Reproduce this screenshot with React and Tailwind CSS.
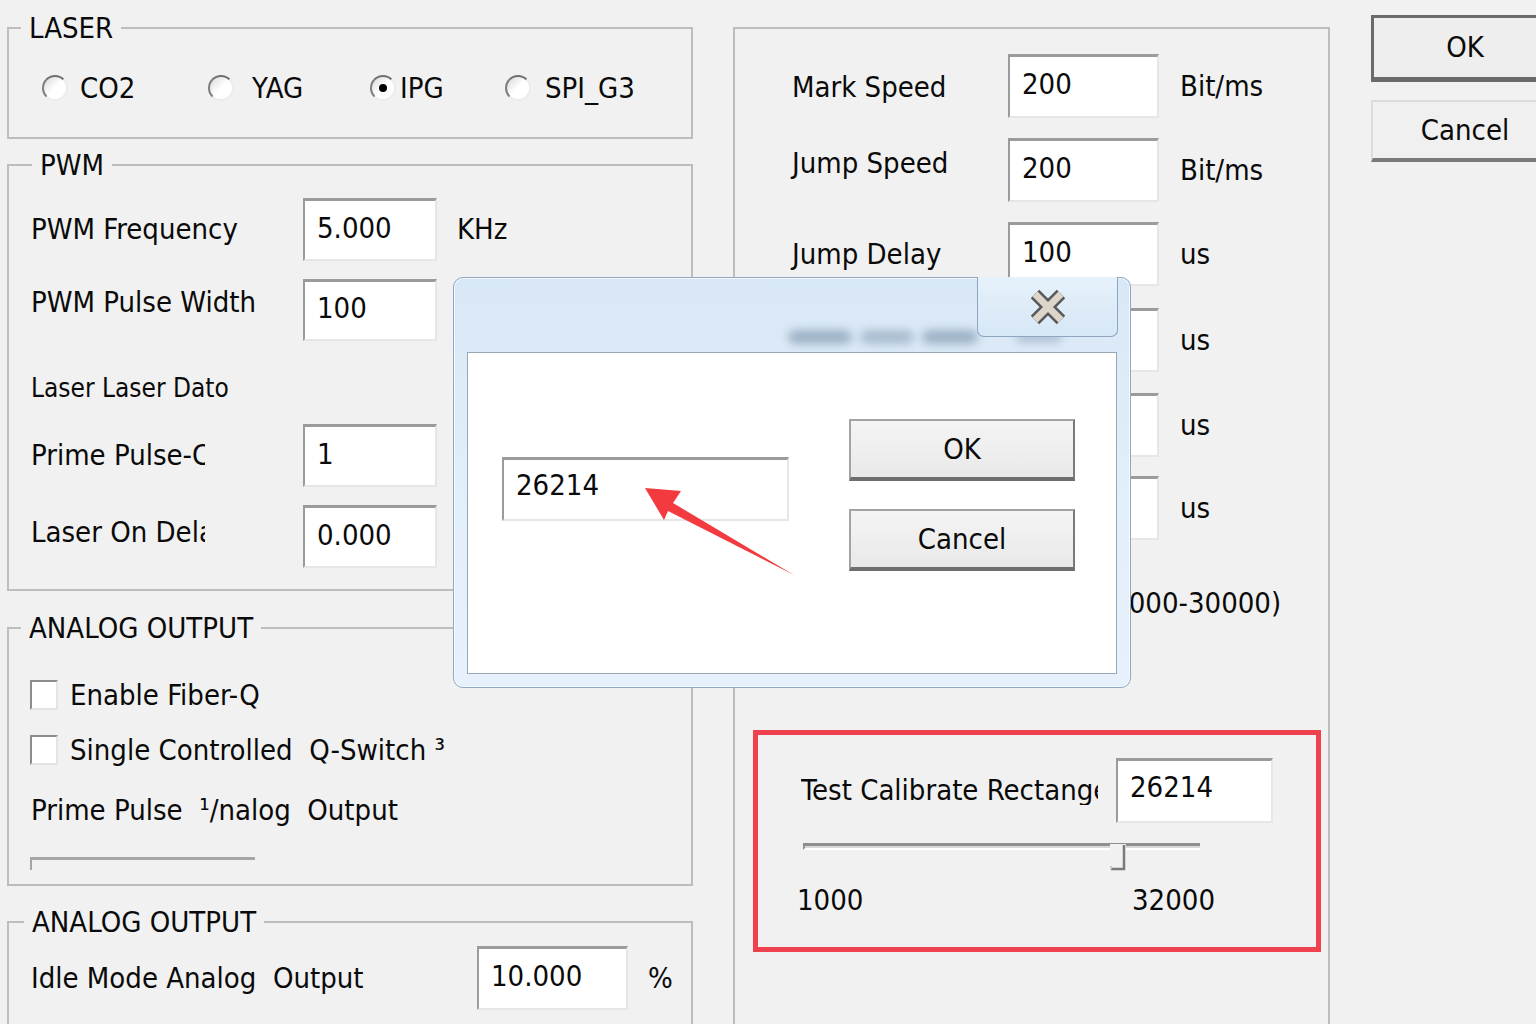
import React from 'react';

const FONT = "font-['DejaVu_Sans_Condensed','DejaVu_Sans',sans-serif]";

function TextBox({ className = '', children }) {
  return (
    <div
      className={`shrink-0 bg-white border-2 border-t-[3px] border-t-[#9b9b9b] border-l-[#9b9b9b] border-r-[#e6e6e6] border-b-[#e6e6e6] flex items-center pl-[12px] pb-[4px] text-[29px] leading-none ${className}`}
    >
      {children}
    </div>
  );
}

function WinButton({ className = '', children }) {
  return (
    <div
      className={`shrink-0 bg-gradient-to-b from-[#f4f4f4] to-[#e9e9e9] border-2 border-t-[#a3a3a3] border-l-[#a3a3a3] border-r-[#7a7a7a] border-b-[4px] border-b-[#6e6e6e] flex items-center justify-center text-[29px] leading-none ${className}`}
    >
      {children}
    </div>
  );
}

function Radio({ checked }) {
  return (
    <div className="shrink-0 w-[26px] h-[26px] rounded-full bg-gradient-to-br from-[#d8d8d8] via-white to-white border-2 border-t-[#6f6f6f] border-l-[#7d7d7d] border-r-[#ececec] border-b-[#ececec] flex items-center justify-center">
      {checked && <div className="w-[8px] h-[8px] rounded-full bg-black" />}
    </div>
  );
}

function Check() {
  return (
    <div className="shrink-0 w-[28px] h-[30px] bg-white border-2 border-t-[#8c8c8c] border-l-[#8c8c8c] border-r-[#e4e4e4] border-b-[#e4e4e4]" />
  );
}

function Group({ title, className = '', legendClass = 'ml-[12px]', children }) {
  return (
    <fieldset className={`shrink-0 border-2 border-[#bdbdbd] ${className}`}>
      <legend className={`${legendClass} px-[8px] text-[29px] leading-[36px]`}>{title}</legend>
      {children}
    </fieldset>
  );
}

function Row({ label, value, unit, className = '' }) {
  return (
    <div className={`flex items-center h-[64px] ${className}`}>
      <div className="w-[216px] shrink-0 whitespace-nowrap">{label}</div>
      <TextBox className="w-[151px] h-[64px]">{value}</TextBox>
      <div className="ml-[21px]">{unit}</div>
    </div>
  );
}

export default function App() {
  return (
    <div className={`relative w-[1536px] h-[1024px] overflow-hidden bg-[#f1f1f1] text-[#0a0a0a] text-[29px] leading-none flex ${FONT}`}>
      {/* left column */}
      <div className="shrink-0 ml-[7px] w-[686px] flex flex-col">
        <Group title="LASER" className="mt-[10px] h-[129px]">
          <div className="mt-[24px] h-[36px] pl-[33px] flex items-center">
            <div className="w-[166px] flex items-center gap-[12px]"><Radio /><span>CO2</span></div>
            <div className="w-[162px] flex items-center gap-[18px]"><Radio /><span>YAG</span></div>
            <div className="w-[135px] flex items-center gap-[4px]"><Radio checked /><span>IPG</span></div>
            <div className="flex items-center gap-[14px]"><Radio /><span>SPI_G3</span></div>
          </div>
        </Group>

        <Group title="PWM" legendClass="ml-[23px]" className="mt-[8px] h-[444px]">
          <div className="mt-[15px] h-[63px] pl-[22px] flex items-center">
            <div className="w-[272px] shrink-0">PWM Frequency</div>
            <TextBox className="w-[134px] h-[63px]">5.000</TextBox>
            <div className="ml-[20px]">KHz</div>
          </div>
          <div className="mt-[18px] h-[62px] pl-[22px] flex items-center">
            <div className="w-[272px] shrink-0 mb-[16px]">PWM Pulse Width</div>
            <TextBox className="w-[134px] h-[62px]">100</TextBox>
          </div>
          <div className="mt-[29px] h-[36px] pl-[22px] flex items-center text-[26px]">Laser Laser Dato</div>
          <div className="mt-[18px] h-[63px] pl-[22px] flex items-center">
            <div className="w-[272px] shrink-0">
              <div className="w-[174px] overflow-hidden whitespace-nowrap">Prime Pulse-Count</div>
            </div>
            <TextBox className="w-[134px] h-[63px]">1</TextBox>
          </div>
          <div className="mt-[18px] h-[63px] pl-[22px] flex items-center">
            <div className="w-[272px] shrink-0 mb-[8px]">
              <div className="w-[174px] overflow-hidden whitespace-nowrap">Laser On Delay</div>
            </div>
            <TextBox className="w-[134px] h-[63px]">0.000</TextBox>
          </div>
        </Group>

        <Group title="ANALOG OUTPUT" className="mt-[19px] h-[276px]">
          <div className="mt-[34px] h-[30px] pl-[21px] flex items-center">
            <Check />
            <span className="ml-[12px]">Enable Fiber-Q</span>
          </div>
          <div className="mt-[25px] h-[30px] pl-[21px] flex items-center">
            <Check />
            <span className="ml-[12px] whitespace-pre">Single Controlled  Q-Switch ³</span>
          </div>
          <div className="mt-[27px] h-[36px] pl-[22px] flex items-center whitespace-pre">Prime Pulse  ¹/nalog  Output</div>
          <div className="mt-[29px] ml-[21px] w-[225px] h-[13px] border-t-[3px] border-l-2 border-[#a6a6a6]" />
        </Group>

        <Group title="ANALOG OUTPUT" legendClass="ml-[15px]" className="mt-[18px] h-[200px]">
          <div className="mt-[6px] h-[64px] pl-[22px] flex items-center">
            <div className="w-[446px] shrink-0 whitespace-pre">Idle Mode Analog  Output</div>
            <TextBox className="w-[151px] h-[64px]">10.000</TextBox>
            <div className="ml-[20px]">%</div>
          </div>
        </Group>
      </div>

      {/* right group */}
      <div className="shrink-0 ml-[40px] mt-[27px] w-[597px] h-[1100px] border-2 border-[#bdbdbd] pl-[57px]">
        <Row className="mt-[25px]" label={<span className="relative top-[1px]">Mark Speed</span>} value="200" unit="Bit/ms" />
        <Row className="mt-[20px]" label={<span className="relative -top-[7px]">Jump Speed</span>} value="200" unit="Bit/ms" />
        <Row className="mt-[20px]" label="Jump Delay" value="100" unit="us" />
        <Row className="mt-[22px]" label="" value="" unit="us" />
        <Row className="mt-[21px]" label="" value="" unit="us" />
        <Row className="mt-[19px]" label="" value="" unit="us" />
        <div className="mt-[45px] h-[36px] ml-[310px] flex items-center whitespace-nowrap">(1000-30000)</div>

        <div className="-ml-[39px] mt-[109px] w-[568px] h-[222px] border-[5px] border-[#f0414f]">
          <div className="mt-[23px] flex items-center">
            <div className="ml-[43px] w-[297px] shrink-0 overflow-hidden whitespace-nowrap">Test Calibrate Rectange</div>
            <TextBox className="ml-[18px] w-[157px] h-[65px] pl-[12px] pb-[8px]">26214</TextBox>
          </div>
          <div className="relative mt-[20px] ml-[45px] w-[397px] h-[30px]">
            <div className="mt-[8px] h-[7px] border-t-[3px] border-l-2 border-[#8f8f8f] border-b-2 border-b-white bg-[#d8d8d8]" />
            <svg className="absolute left-[305px] top-[1px]" width="22" height="28" viewBox="0 0 22 28">
              <rect x="2" y="0" width="16" height="24" fill="#f1f1f1" />
              <path d="M16 1 V25 H3" stroke="#7b7b7b" strokeWidth="2.5" fill="none" />
              <path d="M3 25 V22" stroke="#c8c8c8" strokeWidth="2" />
            </svg>
          </div>
          <div className="mt-[9px] h-[36px] pl-[39px] flex items-center">
            <div className="w-[335px]">1000</div>
            <div>32000</div>
          </div>
        </div>
      </div>

      {/* OK / Cancel */}
      <div className="shrink-0 ml-[41px] mt-[15px] flex flex-col">
        <div className="w-[190px] h-[67px] border-[3px] border-[#6a6a6a] border-b-[5px] bg-[#eeeeee] flex items-center justify-center">
          <span className="-ml-[2px]">OK</span>
        </div>
        <div className="mt-[18px] w-[190px] h-[62px] border-2 border-t-[#dcdcdc] border-l-[#dcdcdc] border-r-[#7a7a7a] border-b-[4px] border-b-[#7a7a7a] bg-[#f0f0f0] flex items-center justify-center">
          <span className="-ml-[2px]">Cancel</span>
        </div>
      </div>

      {/* modal input dialog */}
      <div className="absolute left-[453px] top-[277px] w-[678px] h-[411px] rounded-[10px] border border-[#8fa9c2] bg-gradient-to-b from-[#d9e8f6] via-[#e2eef9] to-[#e7f1fb] shadow-[inset_0_0_0_1px_rgba(255,255,255,0.7)]">
        {/* blurred caption */}
        <div className="absolute left-[334px] top-[52px] flex items-center gap-[8px]">
          <div className="w-[64px] h-[14px] rounded-full bg-[#5d7895] opacity-50 blur-[5px]" />
          <div className="w-[54px] h-[14px] rounded-full bg-[#5d7895] opacity-40 blur-[5px]" />
          <div className="w-[56px] h-[14px] rounded-full bg-[#5d7895] opacity-50 blur-[5px]" />
          <div className="ml-[30px] w-[46px] h-[10px] rounded-full bg-[#5d7895] opacity-40 blur-[5px]" />
        </div>
        {/* close button */}
        <div className="absolute left-[523px] -top-px w-[141px] h-[60px] rounded-b-[7px] border border-t-0 border-[#8ea6bf] bg-gradient-to-b from-[#e6f1fb] to-[#d7e7f6] flex items-center justify-center">
          <svg width="42" height="38" viewBox="0 0 42 38">
            <path d="M8 6 L34 32 M34 6 L8 32" stroke="#585858" strokeWidth="12" />
            <path d="M8 6 L34 32 M34 6 L8 32" stroke="#ddd5c9" strokeWidth="7" />
          </svg>
        </div>
        {/* client area */}
        <div className="absolute left-[13px] top-[74px] w-[650px] h-[322px] bg-white border border-[#9aa8b6] flex">
          <TextBox className="ml-[34px] mt-[104px] w-[287px] h-[64px] pl-[6px] pb-[8px]">26214</TextBox>
          <div className="ml-[60px] mt-[66px] flex flex-col">
            <WinButton className="w-[226px] h-[62px]">OK</WinButton>
            <WinButton className="mt-[28px] w-[226px] h-[62px]">Cancel</WinButton>
          </div>
        </div>
      </div>

      {/* red annotation arrow */}
      <svg className="absolute left-0 top-0 pointer-events-none" width="1536" height="1024">
        <polygon points="645,488 681,491 673,503 794,575 668,511 664,520" fill="#f23a3f" />
      </svg>
    </div>
  );
}
